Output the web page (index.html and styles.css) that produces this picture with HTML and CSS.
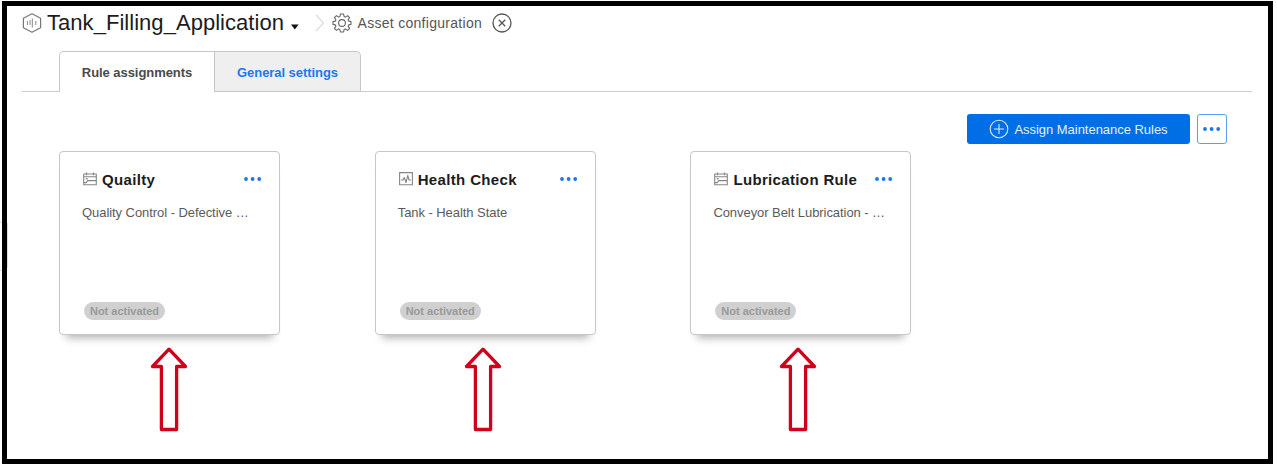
FILE: index.html
```html
<!DOCTYPE html>
<html lang="en">
<head>
<meta charset="utf-8">
<title>Asset configuration</title>
<link rel="stylesheet" href="styles.css">
</head>
<body>
<svg class="defs" width="0" height="0">
  <symbol id="dots" viewBox="0 0 18 4"><circle cx="2" cy="2" r="1.9"/><circle cx="8.6" cy="2" r="1.9"/><circle cx="15.2" cy="2" r="1.9"/></symbol>
  <symbol id="calendar" viewBox="0 0 14 14"><path d="M.7 2h12.6v10.8H.7zM.7 4.8h12.6M3.5.4v2.8M10.5.4v2.8M.9 10.6h2.3l1.6-2h8.4M2.8 6.9h2"/></symbol>
  <symbol id="pulse" viewBox="0 0 14 14"><path d="M.6.6h12.8v12.2H.6zM2 8h2l1.3-2.5L7 10.5 8.8 3.3 10 8h2"/></symbol>
  <symbol id="arrow" viewBox="0 0 38 87"><path d="M19 3.2 35.5 20.5H26.6V83.5H11.4V20.5H2.5z"/></symbol>
</svg>
<div class="frame">
  <div class="handle"></div>
  <header class="breadcrumb">
    <svg class="app-icon" width="20" height="20" viewBox="0 0 20 20"><path d="M10 .8 18.6 5.2v9.6L10 19.2 1.4 14.8V5.2z"/><path class="bars" d="M5.4 8v4M8 7v5M10.3 5.5v9M13.8 8v4"/></svg>
    <h1>Tank_Filling_Application</h1>
    <svg class="caret" width="8" height="6" viewBox="0 0 8 6"><path d="M0 .5h7.6L3.8 5.6z"/></svg>
    <svg class="chevron" width="10" height="18" viewBox="0 0 10 18"><path d="M1 1l7.5 8L1 17"/></svg>
    <svg class="gear" width="20" height="20" viewBox="0 0 20 20"><path d="M8.4 1h3.2l.5 2.5 1.3.6 2.2-1.5 2 2-1.5 2.2.6 1.3 2.3.5v2.8l-2.3.5-.6 1.3 1.5 2.2-2 2-2.2-1.5-1.3.6-.5 2.5H8.4l-.5-2.5-1.3-.6-2.2 1.5-2-2 1.5-2.2-.6-1.3L1 11.4V8.6l2.3-.5.6-1.3-1.5-2.2 2-2 2.2 1.5 1.3-.6z"/><circle cx="10" cy="10" r="3.4"/></svg>
    <span class="crumb">Asset configuration</span>
    <svg class="close" width="20" height="20" viewBox="0 0 20 20"><circle cx="10" cy="10" r="9"/><path d="M6.8 6.8l6.4 6.4M13.2 6.8l-6.4 6.4"/></svg>
  </header>
  <nav class="tabs">
    <a class="tab active">Rule assignments</a>
    <a class="tab">General settings</a>
  </nav>
  <div class="toolbar">
    <button class="assign"><svg width="20" height="20" viewBox="0 0 20 20"><circle cx="10" cy="10" r="8.8"/><path d="M10 5v10M5 10h10"/></svg><span>Assign Maintenance Rules</span></button>
    <button class="more"><svg class="dots" width="18" height="4"><use href="#dots"/></svg></button>
  </div>
  <main class="cards">
    <div class="column">
      <section class="card">
        <div class="heading"><svg class="rule-icon" width="14" height="14"><use href="#calendar"/></svg><h2>Quailty</h2><svg class="dots" width="18" height="4"><use href="#dots"/></svg></div>
        <p>Quality Control - Defective …</p>
        <span class="status">Not activated</span>
      </section>
    </div>
    <div class="column">
      <section class="card">
        <div class="heading"><svg class="rule-icon" width="14" height="14"><use href="#pulse"/></svg><h2>Health Check</h2><svg class="dots" width="18" height="4"><use href="#dots"/></svg></div>
        <p>Tank - Health State</p>
        <span class="status">Not activated</span>
      </section>
    </div>
    <div class="column">
      <section class="card">
        <div class="heading"><svg class="rule-icon" width="14" height="14"><use href="#calendar"/></svg><h2>Lubrication Rule</h2><svg class="dots" width="18" height="4"><use href="#dots"/></svg></div>
        <p>Conveyor Belt Lubrication - …</p>
        <span class="status">Not activated</span>
      </section>
    </div>
  </main>
  <div class="arrows">
    <svg width="38" height="87"><use href="#arrow"/></svg>
    <svg width="38" height="87"><use href="#arrow"/></svg>
    <svg width="38" height="87"><use href="#arrow"/></svg>
  </div>
</div>
</body>
</html>
```
FILE: styles.css
```css
* { box-sizing: border-box; }
body { margin: 0; padding: 1px 0 0 2px; background: #fff; font-family: "Liberation Sans", Arial, sans-serif; overflow: hidden; }
h1, h2, p { margin: 0; font-weight: normal; white-space: nowrap; }
svg { display: block; flex: none; fill: none; stroke-linejoin: round; }
.defs { position: absolute; }
.frame { position: relative; width: 1271px; height: 463px; border: 5px solid #000; padding: 5px 16px 0 15px; }
.handle { position: absolute; left: 0; top: 217px; width: 1px; height: 45px; background: #dedede; }
.handle::before { content: ""; position: absolute; left: -7px; top: -1px; width: 2px; height: 47px; border: 1px solid #ddd; border-width: 1px 0; }

.breadcrumb { display: flex; align-items: center; height: 24px; }
.app-icon { stroke: #777; stroke-width: 1.2; }
.app-icon .bars { stroke: #888; stroke-width: 1; }
h1 { width: 238px; margin-left: 5px; font-size: 22px; letter-spacing: .04px; line-height: 24px; color: #1c1c1c; }
.caret { margin: 7px 0 0 6px; fill: #111; }
.chevron { margin-left: 16px; stroke: #ddd; stroke-width: 1.2; }
.gear { margin-left: 7px; stroke: #666; stroke-width: 1.1; }
.crumb { width: 125px; margin-left: 5.5px; font-size: 14px; letter-spacing: .29px; color: #555; white-space: nowrap; }
.close { margin-left: 9.5px; stroke: #555; stroke-width: 1.3; }

.tabs { display: flex; height: 57px; padding: 16px 0 0 37px; background: linear-gradient(#ccc, #ccc) left bottom / 100% 1px no-repeat; }
.tab { width: 146px; height: 41px; border: 1px solid #c6c6c6; border-left: 0; border-radius: 0 5px 0 0; background: #efefef; color: #2079ee; font-size: 13px; font-weight: bold; letter-spacing: -.06px; line-height: 41px; text-align: center; }
.tab.active { width: 156px; border-left: 1px solid #c6c6c6; border-bottom: 0; border-radius: 5px 0 0 0; background: #fff; color: #4a4a4a; }

.toolbar { display: flex; justify-content: flex-end; gap: 7px; padding: 22px 25px 0 0; }
button { display: flex; align-items: center; justify-content: center; height: 30px; padding: 0; font: 13px "Liberation Sans", Arial, sans-serif; border-radius: 3px; }
.assign { width: 223px; gap: 5px; border: 0; background: #006fe6; color: #e3effc; letter-spacing: -.03px; white-space: nowrap; }
.assign svg { stroke: #d8e9fc; stroke-width: 1.1; }
.more { width: 30px; border: 1px solid #5c9ff0; background: #fff; }
.dots { fill: #1876ee; }

.cards { display: flex; gap: 94.7px; padding: 7px 0 0 37px; }
.column { width: 221px; }
.card { display: flex; flex-direction: column; align-items: flex-start; height: 184px; padding: 17px 17px 14px 22px; border: 1px solid #c6c6c6; border-radius: 4px; background: #fff; box-shadow: 0 10px 8px -7px rgba(0, 0, 0, .3); }
.heading { display: flex; align-items: center; width: 100%; height: 21px; }
.rule-icon { margin: -2px 0 0 1px; stroke: #858585; stroke-width: 1.1; }
.heading h2 { margin-left: 5px; font-size: 15px; letter-spacing: .35px; line-height: 21px; font-weight: bold; color: #1c1c1c; }
.heading .dots { margin: -1px 0 0 auto; }
.card p { margin-top: 14px; font-size: 13px; letter-spacing: -.06px; line-height: 18px; color: #5b5b5b; }
.status { width: 81px; height: 18px; margin: auto 0 0 2px; border-radius: 9px; background: #d0d0d0; color: #999; font-size: 11px; font-weight: bold; line-height: 18px; text-align: center; white-space: nowrap; }
.arrows { display: flex; gap: 276.5px; padding: 11px 0 0 127.7px; }
.arrows svg { stroke: #d0021b; stroke-width: 3.3; }
```
